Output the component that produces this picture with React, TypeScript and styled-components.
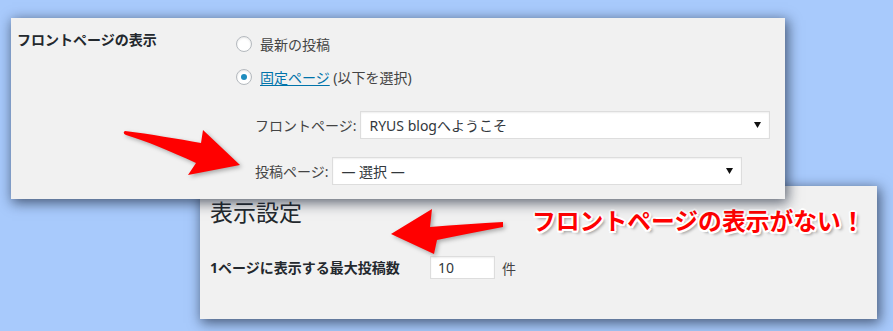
import React from 'react';
import styled, { createGlobalStyle } from 'styled-components';

const GlobalStyle = createGlobalStyle`
    body {
        margin: 0;
        background: #a8cafc;
        font-family: "Noto Sans", "Noto Sans CJK JP", sans-serif;
    }
`;

const Canvas = styled.div`
    position: relative;
    width: 893px;
    height: 331px;
    overflow: hidden;
    padding-top: 18px;
    box-sizing: border-box;
    background: #a8cafc;
`;

const Panel = styled.div<{ $left: number; $width: number; $height: number; $layer: number }>`
    position: relative;
    z-index: ${(p) => p.$layer};
    margin-left: ${(p) => p.$left}px;
    width: ${(p) => p.$width}px;
    height: ${(p) => p.$height}px;
    box-sizing: border-box;
    background: #f1f1f1;
    box-shadow: 2px 3px 12px 1px rgba(20, 30, 50, 0.65);
`;

const FrontPanel = styled(Panel)`
    display: grid;
    grid-template-columns: 219px 1fr;
    padding: 12px 0 0 6px;
`;

const BackPanel = styled(Panel)`
    margin-top: -13px;
    padding: 11px 10px;
`;

const FieldLabel = styled.div`
    font-size: 14px;
    line-height: 20px;
    font-weight: 700;
    color: #23282d;
`;

const Fieldset = styled.div`
    display: flex;
    flex-direction: column;
    padding-top: 4px;
`;

const RadioRow = styled.label<{ $gap?: number }>`
    display: flex;
    align-items: center;
    gap: 8px;
    height: 20px;
    margin-bottom: ${(p) => p.$gap ?? 0}px;
    font-size: 14px;
    color: #444;
`;

const Radio = styled.span<{ $checked?: boolean }>`
    position: relative;
    width: 16px;
    height: 16px;
    box-sizing: border-box;
    border-radius: 50%;
    border: 1px solid #b4b9be;
    background: #fff;
    box-shadow: inset 0 1px 2px rgba(0, 0, 0, 0.1);
    flex-shrink: 0;
    &::after {
        content: '';
        display: ${(p) => (p.$checked ? 'block' : 'none')};
        position: absolute;
        left: 4px;
        top: 4px;
        width: 6px;
        height: 6px;
        border-radius: 50%;
        background: #1e8cbe;
    }
`;

const Link = styled.a`
    color: #0073aa;
    text-decoration: underline;
    text-underline-offset: 2px;
`;

const SubRow = styled.div<{ $gap?: number }>`
    display: flex;
    align-items: center;
    gap: 4px;
    padding-left: 19px;
    margin-bottom: ${(p) => p.$gap ?? 0}px;
    font-size: 14px;
    color: #444;
`;

const Select = styled.div`
    display: flex;
    align-items: center;
    justify-content: space-between;
    width: 410px;
    height: 28px;
    box-sizing: border-box;
    padding: 0 8px 0 8px;
    background: #fff;
    border: 1px solid #ddd;
    box-shadow: inset 0 1px 2px rgba(0, 0, 0, 0.07);
    font-size: 14px;
    color: #32373c;
`;

const Caret = () => (
    <svg width="7" height="6" viewBox="0 0 7 6">
        <path d="M0 0 H7 L3.5 6 Z" fill="#111" />
    </svg>
);

const Heading = styled.h2`
    margin: 0;
    font-size: 23px;
    line-height: 30px;
    font-weight: 400;
    color: #23282d;
`;

const SettingRow = styled.div`
    display: grid;
    grid-template-columns: 213px auto auto;
    justify-content: start;
    align-items: center;
    column-gap: 7px;
    margin-top: 29px;
    font-size: 14px;
    color: #444;
`;

const NumberInput = styled.div`
    width: 65px;
    height: 23px;
    box-sizing: border-box;
    padding: 0 7px;
    display: flex;
    align-items: center;
    background: #fff;
    border: 1px solid #ddd;
    box-shadow: inset 0 1px 2px rgba(0, 0, 0, 0.07);
    font-size: 14px;
    color: #32373c;
`;

const Callout = styled.span`
    position: absolute;
    left: 332px;
    top: 20px;
    font-size: 23.8px;
    line-height: 30px;
    font-weight: 700;
    color: #ff0000;
    white-space: nowrap;
    text-shadow:
        2px 0 0 #fff, -2px 0 0 #fff, 0 2px 0 #fff, 0 -2px 0 #fff,
        1.5px 1.5px 0 #fff, -1.5px 1.5px 0 #fff, 1.5px -1.5px 0 #fff, -1.5px -1.5px 0 #fff,
        3px 3px 3px rgba(0, 0, 0, 0.35);
`;

const Overlay = styled.svg`
    position: absolute;
    left: 0;
    top: 0;
    z-index: 5;
    pointer-events: none;
    filter: drop-shadow(2px 2px 2px rgba(0, 0, 0, 0.3));
`;

export default function App() {
    return (
        <>
            <GlobalStyle />
            <Canvas>
                <FrontPanel $left={11} $width={774} $height={181} $layer={2}>
                    <FieldLabel>フロントページの表示</FieldLabel>
                    <Fieldset>
                        <RadioRow $gap={13}>
                            <Radio />
                            最新の投稿
                        </RadioRow>
                        <RadioRow $gap={24}>
                            <Radio $checked />
                            <span>
                                <Link>固定ページ</Link> (以下を選択)
                            </span>
                        </RadioRow>
                        <SubRow $gap={18}>
                            フロントページ:
                            <Select>
                                RYUS blogへようこそ
                                <Caret />
                            </Select>
                        </SubRow>
                        <SubRow>
                            投稿ページ:
                            <Select>
                                — 選択 —
                                <Caret />
                            </Select>
                        </SubRow>
                    </Fieldset>
                </FrontPanel>
                <BackPanel $left={200} $width={677} $height={133} $layer={1}>
                    <Heading>表示設定</Heading>
                    <Callout>フロントページの表示がない！</Callout>
                    <SettingRow>
                        <FieldLabel>1ページに表示する最大投稿数</FieldLabel>
                        <NumberInput>10</NumberInput>
                        <span>件</span>
                    </SettingRow>
                </BackPanel>
                <Overlay width="893" height="331" viewBox="0 0 893 331">
                    <path
                        d="M125,131 C150,134 178,139 201,143 L203,130 L240,165 L188,175 L196,163 C170,151 146,141 126,135 Q122,133 125,131 Z"
                        fill="#ff0000"
                    />
                    <path
                        d="M391,234 L432,209 L430,227 C455,225 480,223 503,222 L503,227 C480,231 458,236 437,240 L434,254 Z"
                        fill="#ff0000"
                    />
                </Overlay>
            </Canvas>
        </>
    );
}
